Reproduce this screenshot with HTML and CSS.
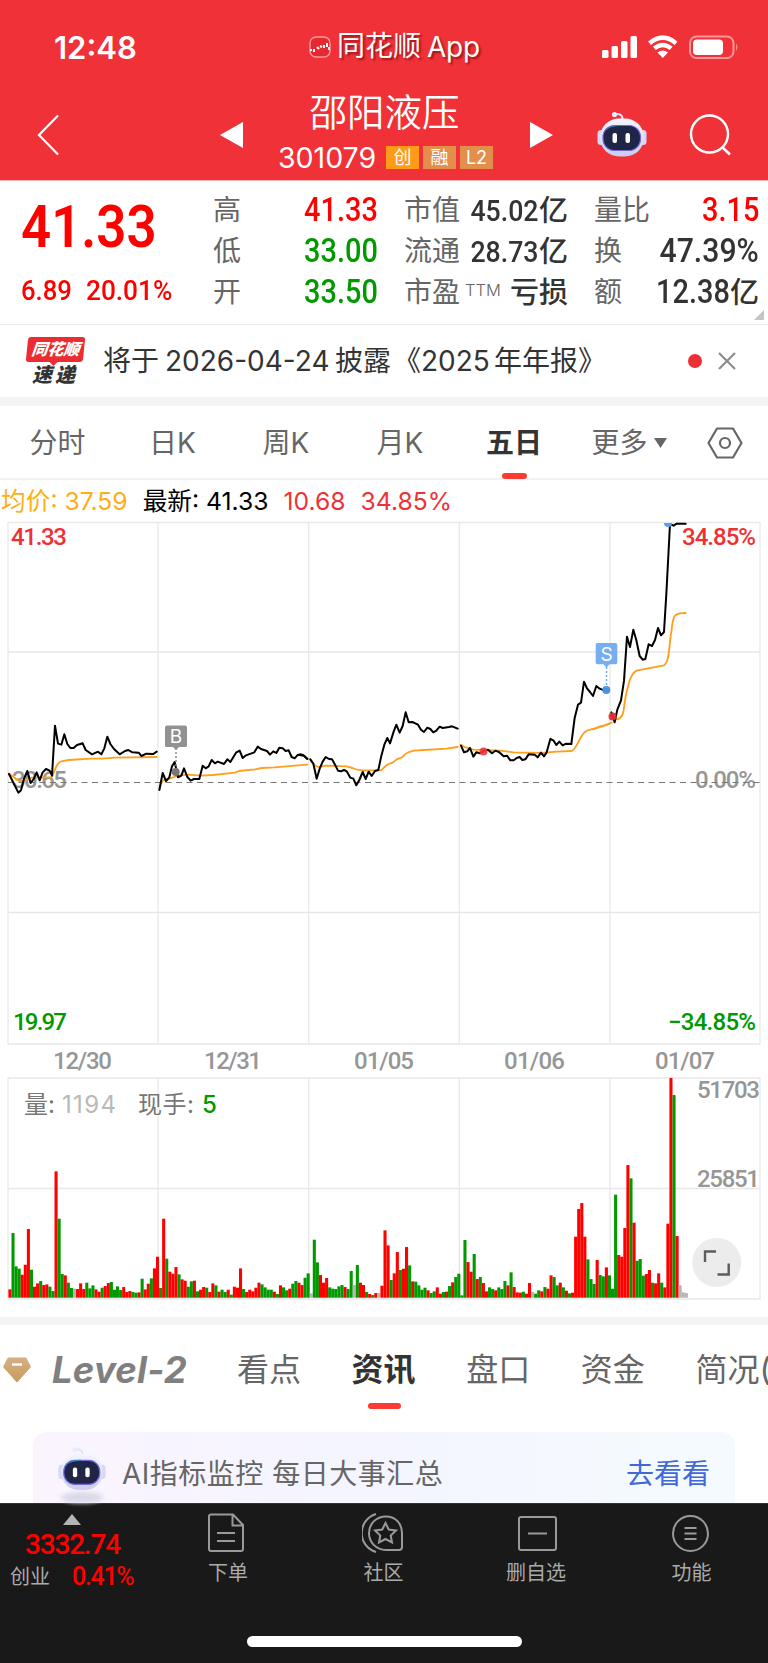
FILE: index.html
```html
<!DOCTYPE html>
<html lang="zh-CN">
<head>
<meta charset="utf-8">
<title>邵阳液压 301079</title>
<link rel="stylesheet" href="styles.css">
</head>
<body>
<svg width="0" height="0" class="defs">
  <defs>
    <linearGradient id="shell" x1="0" y1="0" x2="0" y2="1"><stop offset="0" stop-color="#f4f5ff"/><stop offset="1" stop-color="#c9cdf0"/></linearGradient>
    <linearGradient id="gold" x1="0" y1="0" x2="0" y2="1"><stop offset="0" stop-color="#d3b083"/><stop offset="1" stop-color="#c99b5c"/></linearGradient>
    <symbol id="robot" viewBox="0 0 50 47">
      <path d="M25.500 8C25.500 3.500 22 2.500 18 3" fill="none" stroke="#dfe2fa" stroke-width="2" stroke-linecap="round"/>
      <circle cx="17.500" cy="3.500" r="2.600" fill="#e9ebff"/>
      <rect x="0.500" y="19" width="7" height="15" rx="3.500" fill="#d5d7f5"/>
      <rect x="42.500" y="19" width="7" height="15" rx="3.500" fill="#d5d7f5"/>
      <rect x="3" y="7.500" width="44" height="38" rx="19" fill="url(#shell)"/>
      <rect x="6" y="14.500" width="37.500" height="25" rx="11.500" fill="#1e2546" stroke="#7868df" stroke-width="1.200"/>
      <path d="M8.500 19Q13 14.500 24 14.500" fill="none" stroke="#397fa8" stroke-width="1.200"/>
      <rect x="15.500" y="22" width="4.500" height="10" rx="2" fill="#fff"/>
      <rect x="28.500" y="22" width="4.500" height="10" rx="2" fill="#fff"/>
    </symbol>
  </defs>
</svg>

<header class="header">
  <div class="status">
    <span class="clock">12:48</span>
    <span class="app">
      <svg width="22" height="22" viewBox="0 0 22 22"><rect x="1" y="1" width="20" height="20" rx="6" fill="#e42a30" stroke="#ff9a9c" stroke-width="1.400"/><path d="M2 13v2M5 13v3M8 11l2 2M11 10l2 1M15 9v3M18 7v4M20 11v3" stroke="#fff" stroke-width="2"/></svg>
      <span class="app-cn">同花顺</span><span class="app-en">App</span>
    </span>
    <svg class="signal" width="140" height="24" viewBox="601 35 140 24">
      <g fill="#fff"><rect x="602" y="50" width="6.500" height="8" rx="1.500"/><rect x="611.500" y="46" width="6.500" height="12" rx="1.500"/><rect x="621" y="41" width="6.500" height="17" rx="1.500"/><rect x="630.500" y="36" width="6.500" height="22" rx="1.500"/>
      <path d="M657.500 52.500Q662.800 48.500 668 52.500L662.800 58Z"/></g>
      <path d="M649.500 43.300Q662.800 32 676 43.300M654.300 48.300Q662.800 41.500 671.200 48.300" fill="none" stroke="#fff" stroke-width="4.400"/>
      <rect x="690" y="36.500" width="43.500" height="21.500" rx="6.500" fill="none" stroke="#f7979b" stroke-width="2"/>
      <rect x="693" y="39.500" width="30" height="15.500" rx="4" fill="#fff"/><path d="M736 43.500q3 3.500 0 7.500z" fill="#f7979b"/>
    </svg>
  </div>
  <div class="nav">
    <svg width="24" height="42" viewBox="0 0 24 42"><path d="M22 1.500L3 21L22 40.500" fill="none" stroke="#fff" stroke-width="2.200"/></svg>
    <svg class="prev" width="23" height="26" viewBox="0 0 23 26"><path d="M23 0V26L0 13Z" fill="#fff"/></svg>
    <div class="title">
      <h1>邵阳液压</h1>
      <div class="code"><span>301079</span><i class="tag hot">创</i><i class="tag">融</i><i class="tag">L2</i></div>
    </div>
    <svg class="next" width="23" height="26" viewBox="0 0 23 26"><path d="M0 0V26L23 13Z" fill="#fff"/></svg>
    <svg class="bot" width="50" height="47"><use href="#robot"/></svg>
    <svg class="search" width="42" height="42" viewBox="0 0 42 42"><circle cx="20.500" cy="20" r="18.500" fill="none" stroke="#fff" stroke-width="2.400"/><path d="M33 33L41 40.500" stroke="#fff" stroke-width="2.600"/></svg>
  </div>
</header>

<section class="quote">
  <div class="last">
    <div class="price">41.33</div>
    <div class="change"><span>6.89</span><span class="pct">20.01%</span></div>
  </div>
  <dl class="stats s1">
    <dt>高</dt><dd class="up"><span>41.33</span></dd>
    <dt>低</dt><dd class="down"><span>33.00</span></dd>
    <dt>开</dt><dd class="down"><span>33.50</span></dd>
  </dl>
  <dl class="stats s2">
    <dt>市值</dt><dd><span>45.02</span><b>亿</b></dd>
    <dt>流通</dt><dd><span>28.73</span><b>亿</b></dd>
    <dt>市盈<small>TTM</small></dt><dd><b>亏损</b></dd>
  </dl>
  <dl class="stats s3">
    <dt>量比</dt><dd class="up"><span>3.15</span></dd>
    <dt>换</dt><dd><span class="wide">47.39%</span></dd>
    <dt>额</dt><dd><span>12.38</span><b>亿</b></dd>
  </dl>
  <svg class="corner" width="10" height="10"><path d="M10 0V10H0Z" fill="#c4c4c4"/></svg>
</section>

<section class="notice">
  <div class="brand"><span class="brand-top">同花顺</span><span class="brand-bottom">速递</span></div>
  <p class="notice-text"><span>将于</span><span class="num n1">2026-04-24</span><span>披露</span><span class="open">《</span><span class="num n2">2025</span><span>年年报</span><span>》</span></p>
  <i class="dot"></i>
  <svg class="close" width="18" height="18" viewBox="0 0 18 18"><path d="M1 1L17 17M17 1L1 17" stroke="#8c8c8c" stroke-width="2.200"/></svg>
</section>

<nav class="periods">
  <span>分时</span><span>日K</span><span>周K</span><span>月K</span><span class="active">五日</span>
  <span>更多<svg width="13" height="10"><path d="M0 0H13L6.500 10Z" fill="#666"/></svg></span>
  <span><svg width="36" height="32" viewBox="0 0 36 32"><path d="M10 1.500H26L34.500 16L26 30.500H10L1.500 16Z" fill="none" stroke="#666" stroke-width="2.200" stroke-linejoin="round"/><circle cx="18" cy="16" r="5" fill="none" stroke="#666" stroke-width="2.200"/></svg></span>
</nav>

<div class="legend"><span class="avg">均价: 37.59</span><span>最新: 41.33</span><span class="red">10.68</span><span class="red">34.85%</span></div>

<svg class="chart" width="768" height="797" viewBox="0 520 768 797">
  <g fill="none" stroke="#e8e8e8" stroke-width="1.300">
    <path d="M8 522.500H760V1044H8ZM8 652H760M8 912.500H760M158 522V1044M308.700 522V1044M459.300 522V1044M610 522V1044"/>
    <path d="M8 1078H760V1299H8ZM8 1188.500H760M158 1078V1299M308.700 1078V1299M459.300 1078V1299M610 1078V1299"/>
  </g>
  <g class="axis">
    <g class="t-red"><text x="11" y="545" textLength="56">41.33</text><text x="682" y="545" textLength="74">34.85%</text></g>
    <g class="t-grey"><text x="12" y="788" textLength="55">30.65</text><text x="695" y="788" textLength="61">0.00%</text></g>
    <g class="t-green"><text x="13" y="1030" textLength="54">19.97</text><text x="668" y="1030" textLength="88">−34.85%</text></g>
    <g class="t-grey"><text x="697" y="1098" textLength="63">51703</text><text x="697" y="1187" textLength="63">25851</text></g>
    <g class="t-grey date"><text x="53" y="1068.500" textLength="59">12/30</text><text x="204" y="1068.500" textLength="58">12/31</text><text x="354" y="1068.500" textLength="60">01/05</text><text x="504" y="1068.500" textLength="61">01/06</text><text x="655" y="1068.500" textLength="60">01/07</text></g>
  </g>
  <path d="M8 782.500H760" stroke="#777" stroke-width="1.200" stroke-dasharray="6 4.500"/>
  <g fill="none" stroke="#ff9f1a" stroke-width="5.500" stroke-linejoin="round" stroke-linecap="round">
    <path transform="translate(0 660) scale(.33333)" d="M26 341C40 346 48 362 62 364C76 364 84 352 103 352L154 352C163 346 165 308 184 304L206 300L273 296L307 296L345 293L470 291M479 388C482 372 486 358 497 359C512 358 521 348 540 346L563 344L603 347L640 345L705 338L717 333L765 328L785 324L823 322L922 314"/>
    <path transform="translate(300 640) scale(.33333)" d="M30 358C39 372 45 381 62 381L75 377L140 379L157 384C170 391 177 391 190 391L242 391C251 387 254 376 266 372L278 368L290 358L306 352C319 337 328 335 342 332L372 330L440 326L473 321M483 314C493 324 506 324 520 329L600 332L640 337L725 339L770 335L815 333C831 327 840 284 857 275C867 266 880 271 897 260L909 258L935 248"/>
    <path transform="translate(560 510) scale(.33333)" d="M148 642L97 658M153 612C160 622 162 629 172 628C199 621 187 583 204 530C211 497 219 487 230 482L249 478L312 466C330 454 326 404 335 359C339 315 346 312 360 310L377 309"/>
  </g>
  <g fill="none" stroke="#000" stroke-width="6" stroke-linejoin="round" stroke-linecap="round">
    <path transform="translate(0 660) scale(.33333)" d="M27 342L55 398L63 391L72 356L82 333L92 369L101 357L110 337L119 361L128 337L138 327L149 332L156 347L165 197L174 251L184 254L193 223L202 252L211 264H221L231 255L248 250L257 270L276 283L294 275L304 283L313 265L322 230L331 252L342 267L359 283L375 273L385 270L397 277L416 278L424 288L439 281L460 282L470 275M478 390L488 339L498 363L508 352L516 319L524 306L534 352L544 347L552 325L562 351L572 362L582 357L598 357L608 317L617 325L626 319L635 300L645 310L653 305L672 312L682 298L691 306L709 277L719 272L728 294L738 286L763 277L773 260L783 267L801 273L810 284L820 274L829 279L838 263L848 265L857 273L866 271L875 291L884 295L894 284L912 287L922 297"/>
    <path transform="translate(300 640) scale(.33333)" d="M0 343L9 345L22 356M31 358L40 371L50 416L59 386L68 365L77 351L87 357L96 358L105 374L114 392L123 394L132 390L141 395L151 413L160 416L169 436L178 420L188 396L197 417L206 395L215 408L225 393L235 390L243 352L253 314L262 294L270 310L281 275L289 254L299 278L308 258L317 217L326 247L337 246L354 254L363 269L372 276L382 263L391 267L400 277L409 272L419 260L428 264L447 261L456 259L473 266M483 317L492 337L502 334L510 324L520 350L529 337L540 340L551 333L564 329L576 340L586 332L597 336L611 349L621 347L631 361L641 361L650 354L659 351L667 360L676 358L686 343L704 344L713 352L723 338L732 349L740 337L751 297L760 301L769 315L778 305L788 316L798 311L814 312L824 234L834 194L843 188L852 125L861 145L870 156L879 168L889 138L899 146L907 149L920 150"/>
    <path transform="translate(560 510) scale(.33333)" d="M154 607L164 637L172 599L183 571L192 512L201 380L210 411L220 359L229 391L239 438L248 449L256 447L266 403L276 408L285 390L294 354L303 376L312 366L319 252L330 42L341 47L350 41H377"/>
  </g>
  <circle cx="175.700" cy="772" r="4" fill="#777"/><path d="M176 748V768" stroke="#888" stroke-width="1.500" stroke-dasharray="2 2"/>
  <path d="M167 725.500H185Q187 725.500 187 727.500V745.500Q187 747 185 747H179L176 750L173 747H167Q165 747 165 745.500V727.500Q165 725.500 167 725.500Z" fill="#919191"/>
  <text class="mark" x="176" y="743" text-anchor="middle">B</text>
  <circle cx="606.300" cy="690" r="4" fill="#4c8fe8"/><path d="M606.500 667V688" stroke="#6babf3" stroke-width="1.500" stroke-dasharray="2 2"/>
  <path d="M597.500 643H615.500Q617.300 643 617.300 645V662.500Q617.300 664.300 615.500 664.300H609.500L606.500 667.500L603.500 664.300H597.500Q595.700 664.300 595.700 662.500V645Q595.700 643 597.500 643Z" fill="#77adf2"/>
  <text class="mark" x="606.500" y="660.500" text-anchor="middle">S</text>
  <circle cx="483.500" cy="751.500" r="4" fill="#ee393d" fill-opacity=".9"/><circle cx="612.500" cy="716.500" r="4" fill="#e42d32" fill-opacity=".95"/><path d="M664 523h8a4 4 0 0 1-8 0z" fill="#5d9df0"/>
  <g id="bars"></g>
  <g class="vol"><text x="24" y="1113" textLength="31">量:</text><text x="62" y="1112.500" textLength="54" fill="#b9b9b9">1194</text><text x="138" y="1113" textLength="56">现手:</text><text x="202" y="1112.500" fill="#090" font-weight="500">5</text></g>
  <circle cx="716.700" cy="1262.500" r="24.500" fill="#ececec"/><path d="M705 1262V1251.500H716M717.500 1274.500H728.700V1263.500" fill="none" stroke="#5c5c5c" stroke-width="2.400"/>
</svg>

<nav class="sections">
  <svg class="gem" width="28" height="26" viewBox="0 0 28 26"><path d="M5 1H23L27.500 10L14 25L.500 10Z" fill="url(#gold)" stroke="url(#gold)" stroke-linejoin="round"/><path d="M9 7.500H19" stroke="#fff" stroke-width="2.400"/></svg>
  <span class="level">Level-2</span><span>看点</span><span class="active">资讯</span><span>盘口</span><span>资金</span><span class="cut">简况(</span>
</nav>

<section class="promo-area">
  <div class="promo">
    <div class="promo-bot"><svg width="48" height="46"><use href="#robot"/></svg><i></i></div>
    <span class="promo-text">AI指标监控 每日大事汇总</span><a>去看看</a>
  </div>
</section>

<footer class="bottom">
  <div class="bar">
    <div class="index">
      <svg width="18" height="11"><path d="M9 0L18 11H0Z" fill="#b5b5b5"/></svg>
      <div class="index-value">3332.74</div>
      <div class="index-row"><span>创业</span><b>0.41%</b></div>
    </div>
    <div class="item"><svg width="44" height="42" viewBox="3 0 44 42"><path d="M7 2.500H29L39 13V37Q39 39 37 39H7Q5 39 5 37V4.500Q5 2.500 7 2.500ZM28.500 3V13.500H38.500M13 21H31M13 29H31" transform="translate(3 0)"/></svg><span>下单</span></div>
    <div class="item"><svg width="44" height="42" viewBox="0 0 44 42"><path d="M14 2C-5 8-5 34 14 40M24 4.500C34 4.500 40 12 40 21V35Q40 38 37 38H24C14 38 7 30 7 21S14 4.500 24 4.500Z"/><path d="M23.500 11L26.700 17.500L34 18.500L28.700 23.500L30 30.500L23.500 27L17 30.500L18.300 23.500L13 18.500L20.300 17.500Z"/></svg><span>社区</span></div>
    <div class="item"><svg width="44" height="42" viewBox="0 0 44 42"><rect x="5" y="5" width="37" height="33" rx="2"/><path d="M14 21.500H33"/></svg><span>删自选</span></div>
    <div class="item"><svg width="44" height="42" viewBox="0 0 44 42"><circle cx="20.500" cy="21.500" r="17.500"/><path d="M14.500 16H26.500M14.500 21.500H26.500M14.500 27H26.500"/></svg><span>功能</span></div>
  </div>
  <div class="home"></div>
</footer>
<script src="chart.js"></script>
</body>
</html>
```

FILE: styles.css
```css
* { box-sizing: border-box; margin: 0; padding: 0; }
body { width: 768px; height: 1663px; overflow: hidden; background: #fff; font-family: Inter, "Noto Sans CJK SC", sans-serif; color: #333; }
svg { display: block; flex: none; }
i { font-style: normal; }
span { white-space: nowrap; }
.defs { position: absolute; }

.header { height: 181px; background: #f03137; border-bottom: 1px solid #fbb3b6; color: #fff; }
.status { display: flex; align-items: center; height: 94px; padding-left: 54px; }
.clock { width: 255px; font-size: 31px; font-weight: 600; letter-spacing: 0; }
.app { display: flex; align-items: center; width: 292px; font-size: 28px; line-height: 36px; text-shadow: 2px 2px 2px rgba(90,0,0,.55); }
.app-cn { margin: -3px 6px 0 6px; }
.app-en { letter-spacing: -.3px; margin-top: -1px; }
.nav { display: flex; align-items: center; height: 82px; padding-left: 36px; }
.prev { margin-left: 160px; }
.title { width: 287px; display: flex; flex-direction: column; align-items: center; }
.title h1 { margin: -3px 4px 0 0; font-size: 37.500px; font-weight: 350; line-height: 45px; }
.code { display: flex; align-items: center; height: 40px; margin: 2px 2px 0 0; font-size: 28.500px; }
.code span { width: 108px; font-weight: 400; }
.tag { width: 33px; height: 23px; margin-right: 4px; background: #e38e4b; font-size: 18px; line-height: 23px; text-align: center; letter-spacing: 0; }
.tag.hot { background: #ff9b17; }
.tag:last-child { margin-right: 0; }
.bot { margin: -2px 0 0 44px; }
.search { margin-left: 42px; }

.quote { position: relative; display: flex; height: 144px; border-bottom: 1px solid #e9e9e9; font-family: Roboto, "Noto Sans CJK SC", sans-serif; }
.last { width: 213px; padding: 16px 0 0 21px; color: #f00; flex: none; }
.price { font-size: 60px; line-height: 60px; font-weight: 600; letter-spacing: 0; transform: scaleX(.88); transform-origin: left; }
.change { display: flex; margin-top: 16px; font-size: 28.500px; line-height: 36px; font-weight: 500; }
.change span { width: 65px; transform: scaleX(.9); transform-origin: left; }
.change .pct { width: auto; transform: scaleX(.92); }
.stats { display: grid; flex: none; grid-template-columns: 50px 1fr; grid-auto-rows: 41px; padding-top: 9px; line-height: 41px; }
.stats dt { display: flex; font-size: 28px; color: #666; white-space: nowrap; }
.stats dd { font-size: 32.500px; font-weight: 500; text-align: right; white-space: nowrap; }
.stats dd span { display: inline-block; transform: scaleX(.89); transform-origin: right; }
.stats dd .wide { transform: scaleX(.93); }
.stats b { font-size: 29px; font-weight: 500; }
.s1 { width: 165px; }
.s2 { width: 164px; margin-left: 26px; }
.s2 dd { font-size: 30px; }
.s3 { width: 165px; margin-left: 26px; }
.stats small { height: 34px; margin-left: 5px; font-family: Inter; font-size: 16.500px; line-height: 36px; font-weight: 300; }
.up { color: #f00; }
.down { color: #090; }
.corner { position: absolute; right: 4px; bottom: 4px; }

.notice { display: flex; align-items: center; height: 72px; padding-left: 26px; }
.brand { width: 77px; display: flex; flex-direction: column; align-items: flex-start; margin-top: 2px; font-style: italic; font-weight: 900; }
.brand-top { position: relative; width: 57px; height: 25px; margin-left: 1px; border-radius: 3px; background: #ec2c30; color: #fff; font-size: 16px; line-height: 24px; text-align: center; transform: skewX(-6deg); }
.brand-top::after { content: ""; position: absolute; left: 24px; top: 25px; border: 4px solid transparent; border-top-color: #ec2c30; border-bottom: 0; }
.brand-bottom { margin-left: 6px; font-size: 20px; line-height: 26px; letter-spacing: 3px; }
.notice-text { display: flex; width: 585px; font-size: 28px; line-height: 40px; }
.num { padding-left: 6px; }
.n1 { width: 176px; letter-spacing: 0; }
.open { margin-left: 2px; }
.n2 { padding: 0; width: 73px; }
.dot { width: 14px; height: 14px; border-radius: 50%; background: #ec3035; }
.close { margin-left: 16px; }

.periods { display: grid; grid-template-columns: 115px 115px 112px 116px 112px 118px 76px; align-items: center; height: 83px; padding-top: 2px; border-top: 9px solid #f4f4f4; border-bottom: 2px solid #f2f2f2; font-size: 28px; line-height: 40px; color: #666; }
.periods span { display: flex; justify-content: center; align-items: center; gap: 6px; }
.periods span:last-child { padding-right: 2px; }
.periods .active, .sections .active { position: relative; font-weight: 700; color: #333; }
.periods .active::after, .sections .active::after { content: ""; position: absolute; left: 50%; top: 50px; width: 25px; height: 6px; margin-left: -12px; border-radius: 3px; background: #fb3b34; }

.legend { display: flex; gap: 15px; height: 40px; padding-left: 1px; font-size: 24.700px; line-height: 42px; color: #000; }
.avg { color: #ffae16; }
.red { color: #ef3237; }

.axis { font: 500 24px Roboto, sans-serif; }
.t-red { fill: #ef2f34; font-weight: 500; }
.t-grey { fill: #969696; }
.t-green { fill: #090; font-weight: 500; }
.mark { font: 400 19px Inter, sans-serif; fill: #fff; }
.vol { font: 400 24px Inter, "Noto Sans CJK SC", sans-serif; fill: #777; }

.sections { display: flex; align-items: center; height: 96px; padding-top: 1px; border-top: 8px solid #f4f4f4; padding-left: 3px; font-size: 32px; line-height: 44px; color: #666; overflow: hidden; }
.sections span { margin-right: 50.600px; }
.sections .level { width: 137px; margin: 0 48px 0 21px; font-family: Inter; font-style: italic; font-weight: 700; font-size: 36.500px; letter-spacing: .2px; color: #808080; }
.sections > * { flex: none; }
.sections .active::after { top: 55px; width: 33px; margin-left: -16px; }

.promo-area { height: 90px; padding: 19px 33px 0; }
.promo { display: flex; align-items: center; height: 71px; padding: 0 25px; border-radius: 14px 14px 0 0; background: linear-gradient(90deg, #fbf4fe, #f4f5fe 45%, #f4fbff); font-size: 28px; color: #666; }
.promo-bot { width: 64px; margin-top: 14px; }
.promo-bot i { display: block; width: 42px; height: 11px; margin-left: 3px; border-radius: 50%; background: #dad9e7; filter: blur(2px); }
.promo-text { flex: 1; margin-top: 12px; line-height: 40px; letter-spacing: .5px; }
.promo a { margin-top: 12px; line-height: 40px; color: #4268d8; }

.bottom { height: 160px; background: #191919; border-top: 1px solid #333; color: #aaa; }
.bar { display: grid; grid-template-columns: 146px 164px 147px 158px 153px; height: 132px; }
.index { display: flex; flex-direction: column; padding: 10px 0 0 10px; }
.index svg { margin-left: 53px; }
.index-value { margin: 2px 0 0 15px; font: 500 28px/36px Roboto, sans-serif; letter-spacing: -1.200px; color: #f00; }
.index-row { display: flex; align-items: center; gap: 22px; font-size: 20px; line-height: 28px; }
.index-row b { font: 500 25px/28px Roboto, sans-serif; letter-spacing: -1.300px; color: #f00; }
.item { display: flex; flex-direction: column; align-items: center; padding-top: 8px; font-size: 20px; line-height: 30px; }
.item svg { fill: none; stroke: #999; stroke-width: 2; margin-bottom: 4px; }
.item:nth-child(2) svg { margin-left: -5px; }
.home { width: 275px; height: 11px; margin-left: 247px; border-radius: 6px; background: #fff; }
```

FILE: chart.js
```js
// Volume per five-minute slot: colour code followed by bar height in thirds of a pixel.
const volume = `r25 g194 g94 g87 r69 r99 r206 g84 r33 r43 g50 r38 r40 g33 g20 r379 g237 g71 r67 g45 g29 n27 r26 r43 r26 g45 g28 g37 r25 r18 g30 r35 r44 g47 g24 g34 g23 r32 r17 r20 g17 g15 r16 g57 r25 r42 g58 r88 r123
g29 r237 g117 r78 r72 r92 g70 r55 r51 g33 g49 r51 g19 r24 r32 g30 r17 r43 g37 r18 g24 g17 r24 g9 r33 r30 r88 g26 r17 r24 r19 r30 r45 g40 g31 g24 g24 r18 g11 r37 g31 g22 r27 g42 g50 r45 r38 g60 g73
n13 g174 g106 r68 r45 r59 g31 g27 g26 g34 g38 r32 g26 g80 n38 g98 r45 r38 g17 r11 g8 r14 n14 r36 r202 r157 g53 r73 r137 g83 r87 r152 g97 r49 g48 g37 g24 g30 r22 g14 g19 r31 r12 g17 r18 g35 r46 g62 g72
g7 g173 r107 r78 g131 r56 g62 r44 r19 g31 g26 r22 g31 g26 g50 r37 g76 r32 r16 r15 g18 r12 r44 n17 g12 g22 r19 g32 r27 r67 g62 g37 r45 g31 r21 g13 r15 r183 r266 r284 r183 g115 g56 g41 r113 g68 g64 r91 g67
g27 g309 r128 r123 r209 r398 g358 r225 g111 g116 g66 r71 r83 g45 r43 r73 g45 r31 r222 r659 g608 r185 n37 n16 n14`.split(/\s+/);

const colours = { r: '#f00', g: '#090', n: '#b5b5b5' };
const layer = document.getElementById('bars');
volume.forEach((entry, i) => {
  const height = Number(entry.slice(1)) / 3;
  const bar = document.createElementNS('http://www.w3.org/2000/svg', 'rect');
  bar.setAttribute('x', 8.4 + i * 3.0745);
  bar.setAttribute('y', 1297.7 - height);
  bar.setAttribute('width', 3.08);
  bar.setAttribute('height', height);
  bar.setAttribute('fill', colours[entry[0]]);
  layer.appendChild(bar);
});
```
